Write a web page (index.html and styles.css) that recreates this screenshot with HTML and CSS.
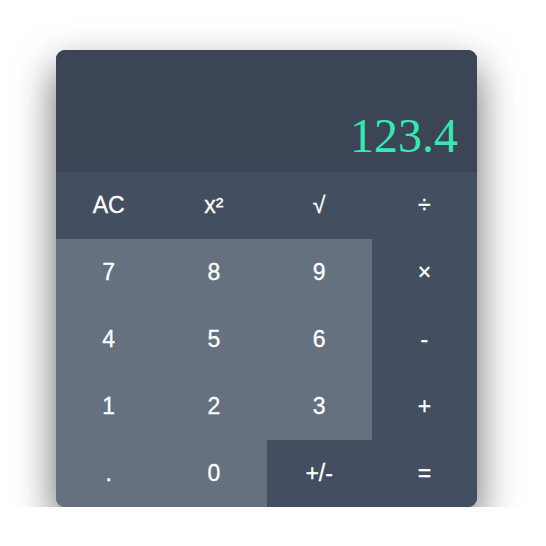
FILE: index.html
```html
<!DOCTYPE html>
<html lang="en">
<head>
<meta charset="utf-8">
<title>Calculator</title>
<link rel="stylesheet" href="styles.css">
</head>
<body>
<div class="calc">
  <div class="display">123.4</div>
  <div class="keys">
    <button class="key op">AC</button>
    <button class="key op">x²</button>
    <button class="key op">√</button>
    <button class="key op">÷</button>
    <button class="key num">7</button>
    <button class="key num">8</button>
    <button class="key num">9</button>
    <button class="key op">×</button>
    <button class="key num">4</button>
    <button class="key num">5</button>
    <button class="key num">6</button>
    <button class="key op">-</button>
    <button class="key num">1</button>
    <button class="key num">2</button>
    <button class="key num">3</button>
    <button class="key op">+</button>
    <button class="key num">.</button>
    <button class="key num">0</button>
    <button class="key op">+/-</button>
    <button class="key op">=</button>
  </div>
</div>
</body>
</html>
```
FILE: styles.css
```css
html, body {
  margin: 0;
  padding: 0;
  background: #ffffff;
}
body {
  padding: 50px 0 0 56px;
}
.calc {
  width: 421px;
  border-radius: 9px;
  overflow: hidden;
  box-shadow: 0 18px 40px rgba(0, 0, 0, 0.6);
  background: #434f60;
}
.display {
  height: 122px;
  box-sizing: border-box;
  background: #3b4556;
  display: flex;
  align-items: flex-end;
  justify-content: flex-end;
  padding: 0 19px 12px 0;
  font-family: "Liberation Serif", "Times New Roman", serif;
  font-size: 48px;
  line-height: 48px;
  color: #35e9b0;
}
.keys {
  display: grid;
  grid-template-columns: repeat(4, 1fr);
  grid-auto-rows: 67px;
}
.key {
  border: none;
  margin: 0;
  padding: 0;
  font-family: "Liberation Sans", Arial, sans-serif;
  font-size: 23px;
  color: #ffffff;
  -webkit-text-stroke: 0.3px #ffffff;
  display: flex;
  align-items: center;
  justify-content: center;
}
.op {
  background: #434f60;
}
.num {
  background: #667180;
}
```
